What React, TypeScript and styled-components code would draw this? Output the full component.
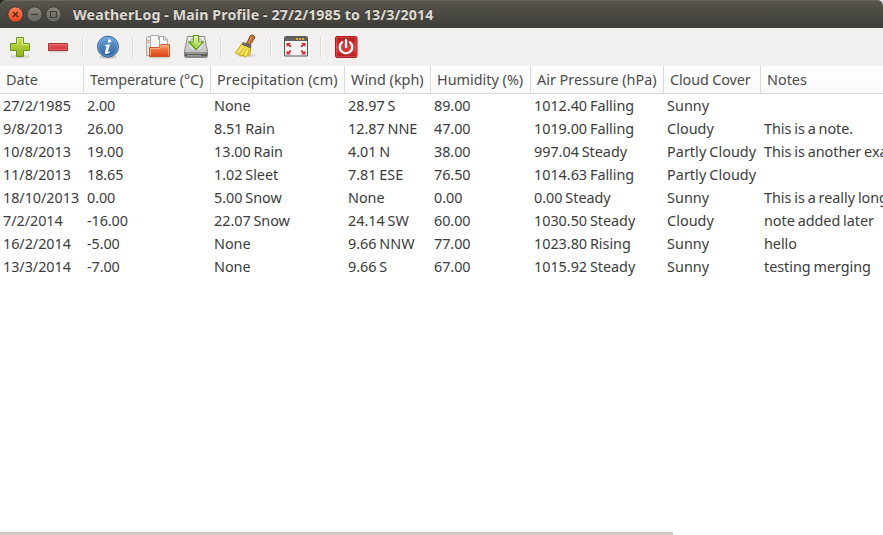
import React from "react";
import styled, { createGlobalStyle } from "styled-components";

const GlobalStyle = createGlobalStyle`
  * { box-sizing: border-box; }
  body { margin: 0; overflow: hidden; background: #fff; }
`;

const Window = styled.div`
  display: flex;
  flex-direction: column;
  width: 883px;
  height: 535px;
  overflow: hidden;
  background: #fff;
  color: #3c3c3c;
  font: 14.4px/23px "Noto Sans", sans-serif;
`;

const TitleFrame = styled.div`
  flex: none;
  height: 28px;
  background: linear-gradient(90deg, #222 50%, #ddd 50%);
`;

const TitleBar = styled.header`
  display: flex;
  align-items: center;
  height: 28px;
  padding: 1px 0 0 7px;
  border-radius: 6px 6px 0 0;
  background: linear-gradient(#59564e, #3d3c38);
  box-shadow: inset 0 1px #69665c;
`;

const WindowButton = styled.svg`
  display: block;
  width: 17px;
  height: 17px;
  margin-right: 2px;
`;

const Title = styled.h1`
  margin: 0 0 0 9px;
  color: #dfdbd2;
  font-size: 14.2px;
  line-height: 20px;
  font-weight: 700;
  letter-spacing: 0.11px;
  white-space: nowrap;
  text-shadow: 0 -1px #2c2b28;
`;

const Toolbar = styled.nav`
  display: flex;
  flex: none;
  align-items: center;
  height: 38px;
  padding-left: 1px;
  background: #f1f0ee;
`;

const ToolButton = styled.button`
  display: grid;
  place-items: center;
  width: 38px;
  height: 38px;
  padding: 0;
  border: 0;
  background: none;

  svg { display: block; width: 24px; height: 24px; overflow: visible; }
`;

const Divider = styled.span`
  width: 2px;
  height: 21px;
  margin: 0 5px;
  border-left: 1px solid #dddbd8;
  border-right: 1px solid #fafafa;
`;

const columns = "83px 127px 134px 86px 100px 133px 97px 123px";

const HeaderRow = styled.div`
  display: grid;
  flex: none;
  grid-template-columns: ${columns};
  height: 28px;
  border-bottom: 1px solid #d9d9d9;
  background: linear-gradient(#fff, #f9f9f9);
`;

const HeaderCell = styled.div<{ $spacing: number }>`
  padding: 2px 0 0 6px;
  border-left: 1px solid #dadada;
  color: #4c4c4c;
  letter-spacing: ${(p) => p.$spacing}px;
  white-space: nowrap;
  overflow: hidden;

  &:first-child { border-left: 0; }
`;

const Rows = styled.main`
  flex: 1;
`;

const Row = styled.div`
  display: grid;
  grid-template-columns: ${columns};
  height: 23px;
`;

const Cell = styled.div<{ $spacing: number }>`
  padding-left: 4px;
  letter-spacing: ${(p) => p.$spacing}px;
  word-spacing: -0.8px;
  white-space: nowrap;
  overflow: hidden;

  &:first-child { padding-left: 3px; }
`;

const ScrollBar = styled.div`
  flex: none;
  width: 673px;
  height: 3px;
  background: #d1ccc8;
`;

const headers: [string, number][] = [
  ["Date", 0],
  ["Temperature (°C)", -0.1],
  ["Precipitation (cm)", 0.14],
  ["Wind (kph)", 0],
  ["Humidity (%)", 0],
  ["Air Pressure (hPa)", 0],
  ["Cloud Cover", -0.12],
  ["Notes", 0],
];

const cellSpacing = [-0.05, -0.1, -0.04, -0.03, -0.05, -0.03, 0.05, -0.04];

const records = [
  ["27/2/1985", "2.00", "None", "28.97 S", "89.00", "1012.40 Falling", "Sunny", ""],
  ["9/8/2013", "26.00", "8.51 Rain", "12.87 NNE", "47.00", "1019.00 Falling", "Cloudy", "This is a note."],
  ["10/8/2013", "19.00", "13.00 Rain", "4.01 N", "38.00", "997.04 Steady", "Partly Cloudy", "This is another example"],
  ["11/8/2013", "18.65", "1.02 Sleet", "7.81 ESE", "76.50", "1014.63 Falling", "Partly Cloudy", ""],
  ["18/10/2013", "0.00", "5.00 Snow", "None", "0.00", "0.00 Steady", "Sunny", "This is a really long note"],
  ["7/2/2014", "-16.00", "22.07 Snow", "24.14 SW", "60.00", "1030.50 Steady", "Cloudy", "note added later"],
  ["16/2/2014", "-5.00", "None", "9.66 NNW", "77.00", "1023.80 Rising", "Sunny", "hello"],
  ["13/3/2014", "-7.00", "None", "9.66 S", "67.00", "1015.92 Steady", "Sunny", "testing merging"],
];

const ControlIcon = ({ kind }: { kind: "close" | "minimize" | "maximize" }) => (
  <WindowButton viewBox="0 0 17 17">
    <defs>
      <linearGradient id={`control-${kind}`} x2="0" y2="1">
        <stop stopColor={kind === "close" ? "#f9815b" : "#8b8880"} />
        <stop offset="1" stopColor={kind === "close" ? "#e2481c" : "#66645e"} />
      </linearGradient>
    </defs>
    <circle cx="8.5" cy="8.5" r="7.7" fill={`url(#control-${kind})`} stroke="#353430" />
    {kind === "close" && <path d="m6 6 5 5m0-5-5 5" stroke="#542312" strokeWidth="1.3" />}
    {kind === "minimize" && <path d="M5 8.5h7" stroke="#3d3c38" strokeWidth="1.2" />}
    {kind === "maximize" && <path d="M5.5 5.5h6v6h-6z" fill="none" stroke="#3d3c38" strokeWidth="1.1" />}
  </WindowButton>
);

const AddIcon = () => (
  <svg viewBox="0 0 24 24">
    <defs><linearGradient id="add" x2="0" y2="1"><stop stopColor="#cde34b" /><stop offset="1" stopColor="#8fae1c" /></linearGradient></defs>
    <ellipse cx="12" cy="21.5" rx="10" ry="1.8" fill="#d5d4d1" />
    <path d="M8.500 2.500h7v6h6v7h-6v6h-7v-6h-6v-7h6z" fill="url(#add)" stroke="#669725" strokeLinejoin="round" />
    <path d="M9.500 9.500v-6h5v6h6" fill="none" stroke="#e2ee90" />
  </svg>
);

const RemoveIcon = () => (
  <svg viewBox="0 0 24 24">
    <defs><linearGradient id="remove" x2="0" y2="1"><stop stopColor="#e45555" /><stop offset="1" stopColor="#cb3339" /></linearGradient></defs>
    <ellipse cx="12" cy="16.5" rx="10" ry="1.5" fill="#dddcda" />
    <path d="M2.500 8.500h19v7h-19z" fill="url(#remove)" stroke="#ae3034" />
    <path d="M3.500 14.500v-5h17v5z" fill="none" stroke="#ec7777" strokeOpacity=".7" />
  </svg>
);

const InfoIcon = () => (
  <svg viewBox="0 0 24 24">
    <defs><linearGradient id="info" x2="0" y2="1"><stop stopColor="#71a7da" /><stop offset="1" stopColor="#285f9d" /></linearGradient></defs>
    <ellipse cx="12" cy="22" rx="9" ry="1.7" fill="#cccac7" />
    <circle cx="12" cy="11.7" r="10.500" fill="url(#info)" stroke="#2d629b" />
    <circle cx="12" cy="11.7" r="9.500" fill="none" stroke="#87b3dc" strokeOpacity=".6" />
    <circle cx="13.500" cy="6" r="1.700" fill="#fff" />
    <path d="M9 10.200q3-.8 5-1l-2 7q-.5 1.700 2 .1l.2.700q-2 2.200-4.200 2.100-1.500-.2-1-2.200l1.600-5.700-1.800-.2z" fill="#fff" />
  </svg>
);

const OpenIcon = () => (
  <svg viewBox="0 0 24 24">
    <defs><linearGradient id="folder" x2="0" y2="1"><stop stopColor="#f7b27d" /><stop offset=".4" stopColor="#ed7440" /><stop offset="1" stopColor="#de4318" /></linearGradient></defs>
    <ellipse cx="13" cy="22" rx="11" ry="1.300" fill="#cccac7" />
    <path d="M.5 20.500V2.500l1.500-1h6l1.500 2v17z" fill="#e6e5e2" stroke="#aaa9a6" />
    <path d="M1.500 7.500h2M1.500 5.500h2" stroke="#dd8a55" />
    <path d="M4.500 17V.5h8l4 4V17z" fill="#f8f8f7" stroke="#a9a9a6" />
    <path d="M12.500.5v4h4" fill="#ddd" stroke="#a6a6a3" />
    <path d="M13.500 17V1.500h5l3 3V17z" fill="#fff" stroke="#a6a6a3" />
    <path d="M17.500 1.500v3.500h4" fill="#ddd" stroke="#a6a6a3" />
    <path d="M3.500 12.500H13l2-3h8.500v12h-20z" fill="url(#folder)" stroke="#cf5528" strokeLinejoin="round" />
    <path d="M4.500 20.500v-7h9l2-3h7v10" fill="none" stroke="#ffc398" strokeOpacity=".7" />
  </svg>
);

const SaveIcon = () => (
  <svg viewBox="0 0 24 24">
    <defs>
      <linearGradient id="drive" x2="0" y2="1"><stop stopColor="#f3f3f2" /><stop offset="1" stopColor="#b1b1af" /></linearGradient>
      <linearGradient id="arrow" x2="0" y2="1"><stop stopColor="#e2f6a5" /><stop offset="1" stopColor="#8dcc2d" /></linearGradient>
    </defs>
    <path d="M3.500 1.500h17l3 15v5l-1.500 1H2l-1.500-1v-5z" fill="url(#drive)" stroke="#858583" />
    <path d="M1 17.500h22v4H1z" fill="#5e5e5d" />
    <path d="M2 18.500h20M3 20.500h14" stroke="#999997" />
    <ellipse cx="12" cy="9.500" rx="8" ry="6.500" fill="#dededc" stroke="#bbb" />
    <path d="M9.500.500h5V7h4.500l-7 7.500L5 7h4.500z" fill="url(#arrow)" stroke="#579915" strokeWidth="1.200" />
    <path d="M10.500 8V1.500h3V8H17l-5 5" fill="none" stroke="#e7f8ba" strokeOpacity=".75" />
  </svg>
);

const BroomIcon = () => (
  <svg viewBox="0 0 24 24">
    <ellipse cx="12" cy="20.500" rx="9" ry="1.800" fill="#d9d7d4" />
    <path d="M16.500.5q2-1.200 3.500.2 1.700 1.600.3 3l-4.500 6.500-3.300-1.700z" fill="#bd7338" stroke="#87501f" />
    <path d="m17.500 2-3 6" stroke="#df9a61" />
    <path d="M7.500 9q-2.500 5.500-6.500 8.700 2 1.500 4 1.300l1.500 2 3-.5 2 1.700 2-2h2q1.800-4.500 1-8.700z" fill="#f1dc43" stroke="#c5a51c" />
    <path d="m8.500 12-4 5.500M11 13l-3.500 6m6-5-2 6" stroke="#fff199" />
    <path d="m10 12.500-4.500 7m7-6-3.500 6.500m6.500-6-1.500 5" stroke="#c2a326" strokeWidth=".8" />
    <path d="m9 7 8.500 3.500-1 2.800L7.800 9.500z" fill="#4b4b50" />
    <path d="m9 8.200 7.800 3.400" stroke="#85858b" />
  </svg>
);

const FullscreenIcon = () => (
  <svg viewBox="0 0 24 24">
    <path d="M1.500 1.500h21q1 0 1 1v18.500H.5V2.500q0-1 1-1z" fill="#f2f2f0" stroke="#595956" />
    <path d="M1 2h22v4H1z" fill="#61615e" />
    <path d="M12 3h2v2h-2zm3 0h2v2h-2zm3 0h2v2h-2z" fill="#e5a82d" />
    <g fill="#cc2c35">
      <path d="M2.500 8h4.300L5.500 9.300 7.500 11.300 6.300 12.500 4 10.500 2.500 12z" />
      <path d="M21.500 8h-4.300l1.300 1.300-2 2 1.200 1.200 2.300-2 1.500 1.500z" />
      <path d="M2.500 19.500h4.300l-1.300-1.300 2-2L6.300 15 4 17l-1.500-1.500z" />
      <path d="M21.500 19.500h-4.300l1.300-1.300-2-2 1.200-1.200 2.300 2 1.500-1.500z" />
    </g>
  </svg>
);

const PowerIcon = () => (
  <svg viewBox="0 0 24 24">
    <defs><linearGradient id="power" x2="0" y2="1"><stop stopColor="#b3131a" /><stop offset=".55" stopColor="#d9413f" /><stop offset="1" stopColor="#b9161e" /></linearGradient></defs>
    <rect x="1.500" y="1.500" width="21.500" height="21" rx="1.500" fill="url(#power)" stroke="#ad1b20" />
    <path d="M2.500 21.500v-19H22v19z" fill="none" stroke="#e76a65" strokeOpacity=".55" />
    <path d="M8.200 7.200a6.200 6.200 0 1 0 7.600 0M12 5v7" fill="none" stroke="#fff" strokeWidth="2.300" strokeLinecap="round" />
  </svg>
);

const toolGroups = [[AddIcon, RemoveIcon], [InfoIcon], [OpenIcon, SaveIcon], [BroomIcon], [FullscreenIcon], [PowerIcon]];

export default function App() {
  return (
    <>
      <GlobalStyle />
      <Window>
        <TitleFrame>
          <TitleBar>
            <ControlIcon kind="close" />
            <ControlIcon kind="minimize" />
            <ControlIcon kind="maximize" />
            <Title>WeatherLog - Main Profile - 27/2/1985 to 13/3/2014</Title>
          </TitleBar>
        </TitleFrame>
        <Toolbar>
          {toolGroups.map((group, g) => (
            <React.Fragment key={g}>
              {g > 0 && <Divider />}
              {group.map((Icon, i) => <ToolButton key={i}><Icon /></ToolButton>)}
            </React.Fragment>
          ))}
        </Toolbar>
        <HeaderRow>
          {headers.map(([label, spacing]) => <HeaderCell key={label} $spacing={spacing}>{label}</HeaderCell>)}
        </HeaderRow>
        <Rows>
          {records.map((record) => (
            <Row key={record[0]}>
              {record.map((value, i) => <Cell key={i} $spacing={cellSpacing[i]}>{value}</Cell>)}
            </Row>
          ))}
        </Rows>
        <ScrollBar />
      </Window>
    </>
  );
}
